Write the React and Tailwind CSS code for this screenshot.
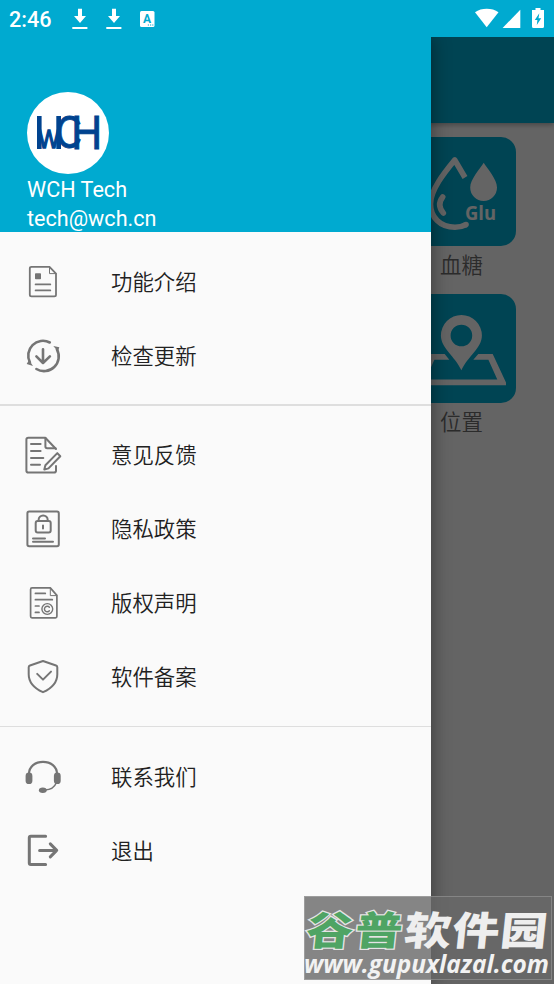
import React from "react";

const MenuIcon = ({ children, width = 2 }) => (
  <svg
    className="h-10 w-10 shrink-0"
    viewBox="0 0 40 40"
    fill="none"
    stroke="#757575"
    strokeWidth={width}
    strokeLinecap="round"
    strokeLinejoin="round"
  >
    {children}
  </svg>
);

const IntroIcon = () => (
  <MenuIcon width={1.8}>
    <path d="M26.5 4.8H8.5Q6.8 4.8 6.8 6.5V32.8Q6.8 34.4 8.5 34.4H31.4Q33 34.4 33 32.8V11.6Z" />
    <path d="M26.5 5V11.6H33" strokeWidth="1" />
    <rect x="12" y="11.2" width="6" height="6" rx="0.8" fill="#757575" stroke="none" />
    <path d="M12.6 22.4H27.3M12.6 28.4H27.3" />
  </MenuIcon>
);

const UpdateIcon = () => (
  <MenuIcon width={2.6}>
    <path d="M6.9 26.3A14.7 14.7 0 0 1 26.8 6.5" />
    <path d="M33.9 13.3A14.7 14.7 0 0 1 13.4 33" />
    <path d="M30.3 10L36.3 11.3L35 15.5Z" fill="#757575" stroke="none" />
    <path d="M3.7 28L6 24L10 30Z" fill="#757575" stroke="none" />
    <path d="M20 13.2V26M13.4 20.4L20 27L26.9 20.4" />
  </MenuIcon>
);

const FeedbackIcon = () => (
  <MenuIcon>
    <path d="M33 31V35.8Q33 37.6 31 37.6H5.3Q3.4 37.6 3.4 35.8V4.5Q3.4 2.7 5.3 2.7H22.3L33 14" />
    <path d="M22.4 3V11.5Q22.4 13.2 24.2 13.2H32.5" />
    <path d="M8 9.1H17.6M8 16H17.6M8 23H20.3M8 29.8H17" />
    <path d="M21.3 34.6L22.4 30.3L34.3 18.1L37.3 21.2L25.5 33.4Z" />
  </MenuIcon>
);

const PrivacyIcon = () => (
  <MenuIcon>
    <rect x="4.4" y="2.6" width="31.4" height="34.7" rx="1.8" />
    <rect x="12.7" y="12" width="15" height="11.4" rx="2" />
    <path d="M15.6 12V11A4.5 4.5 0 0 1 24.7 11V12M20 16.6V19.4" />
    <path d="M10 29.5H22M10 32.8H30" />
  </MenuIcon>
);

const CopyrightIcon = () => (
  <MenuIcon width={1.7}>
    <path d="M27.3 4.9H9Q7.6 4.9 7.6 6.4V33.3Q7.6 34.8 9 34.8H32.5Q33.9 34.8 33.9 33.3V12.4Z" />
    <path d="M27.3 5V12.6H33.8" strokeWidth="1" />
    <path d="M12.4 10.4H22.3M12.4 16.7H29.3M12.4 23H16M12.4 29.4H16" />
    <circle cx="24.3" cy="26" r="5.4" strokeWidth="1.4" />
    <path d="M26.4 24.2A2.8 2.8 0 1 0 26.4 27.8" strokeWidth="1.4" />
  </MenuIcon>
);

const ShieldIcon = () => (
  <MenuIcon>
    <path d="M20 4L33 8.5Q34.3 9 34.3 10.3V17.2C34.3 25.6 28 31.6 20 35.2C12 31.6 5.7 25.6 5.7 17.2V10.3Q5.7 9 7 8.5Z" />
    <path d="M14.2 16.9L20 22.6L28 14.6" />
  </MenuIcon>
);

const ContactIcon = () => (
  <MenuIcon>
    <path d="M6 17C6 9.5 12.2 4.8 20 4.8S34 9.5 34 17" strokeWidth="2.2" />
    <rect x="2.6" y="15.5" width="6.8" height="11.6" rx="3.4" fill="#757575" stroke="none" />
    <rect x="30.9" y="15.5" width="6.8" height="11.6" rx="3.4" fill="#757575" stroke="none" />
    <path d="M33.2 26C31.5 30.3 28 32.7 22 33" strokeWidth="1.5" />
    <ellipse cx="19.8" cy="33.2" rx="3.9" ry="2.7" fill="#757575" stroke="none" />
  </MenuIcon>
);

const ExitIcon = () => (
  <MenuIcon width={3}>
    <path d="M22.6 5.3H7.8Q6.3 5.3 6.3 6.8V32Q6.3 33.5 7.8 33.5H22.6" />
    <path d="M16.6 19.4H33.5M27.3 12.9L33.7 19.4L27.3 25.9" />
  </MenuIcon>
);

const sections = [
  {
    className: "pt-[13px] pb-[11px] border-b-2",
    items: [
      { label: "功能介绍", Icon: IntroIcon },
      { label: "检查更新", Icon: UpdateIcon },
    ],
  },
  {
    className: "py-3 border-b",
    items: [
      { label: "意见反馈", Icon: FeedbackIcon },
      { label: "隐私政策", Icon: PrivacyIcon },
      { label: "版权声明", Icon: CopyrightIcon },
      { label: "软件备案", Icon: ShieldIcon },
    ],
  },
  {
    className: "pt-[13px]",
    items: [
      { label: "联系我们", Icon: ContactIcon },
      { label: "退出", Icon: ExitIcon },
    ],
  },
];

const DownloadIcon = () => (
  <svg className="h-6 w-4" viewBox="0 0 16 24" fill="#fff">
    <path d="M6 1.8H10V9H14L8 16L2 9H6ZM0.3 20H15.4V22H0.3Z" />
  </svg>
);

const StatusBar = () => (
  <div className="relative z-30 flex h-[37px] items-center bg-[#00aad0] text-white">
    <span className="ml-[9px] w-[63px] pt-[2px] font-[Roboto,sans-serif] text-[21.6px] leading-[35px] font-medium">
      2:46
    </span>
    <DownloadIcon />
    <span className="w-[18px]" />
    <DownloadIcon />
    <svg className="ml-[18px] h-4 w-[15px]" viewBox="0 0 15 16">
      <rect width="14.5" height="16" rx="1.5" fill="#fff" />
      <text x="3" y="11.5" fontSize="12" fontWeight="700" fontFamily="Roboto, sans-serif" fill="#00aad0">
        A
      </text>
      <path d="M7.8 14H9M10 14H11.2M12.2 14H13.4" stroke="#00aad0" strokeWidth="1.2" />
    </svg>
    <svg className="ml-auto h-[21px] w-[71px]" viewBox="0 0 71 21" fill="#fff">
      <path d="M0 4.3C6.5 -0.3 17 -0.3 23.5 4.3L11.7 19.3Z" />
      <path d="M45.3 1.7V20H27.6Z" />
      <path d="M60.5 0H65.5V2H69V18.5Q69 20 67.5 20H58.5Q57 20 57 18.5V2H60.5Z" />
      <path d="M64.3 5.2L59.8 12H62.4L61.8 17L66.2 10.2H63.5Z" fill="#00aad0" />
    </svg>
    <span className="w-2" />
  </div>
);

const GlucoseIcon = () => (
  <svg className="h-full w-full" viewBox="0 0 109 109" fill="none" stroke="#fafafa" strokeWidth="5.6">
    <path d="M58 40.5L47.7 23C37 36 23.5 53 23.5 67C23.5 80 33 90.3 48 90.3Q54 90.3 58.7 87.8" strokeLinejoin="round" />
    <circle cx="59" cy="87.6" r="2.8" fill="#fafafa" stroke="none" />
    <path d="M35.7 60Q29.5 68 36.3 76" strokeLinecap="round" />
    <path d="M76.7 25.7C80.5 32 90 42 90 50.5A13.3 13.3 0 0 1 63.2 50.5C63.2 42 73 32 76.7 25.7Z" fill="#fafafa" stroke="none" />
    <text
      x="58"
      y="82.5"
      textLength="31"
      lengthAdjust="spacingAndGlyphs"
      fontSize="19"
      fontWeight="700"
      fontFamily="'Open Sans', sans-serif"
      fill="#fafafa"
      stroke="none"
    >
      Glu
    </text>
  </svg>
);

const LocationIcon = () => (
  <svg className="h-full w-full" viewBox="0 0 109 109" fill="#fafafa" fillRule="evenodd">
    <path d="M54.4 21A20.5 20.5 0 0 1 74.9 41.5C74.9 54 61 62 54.4 76.3C47.8 62 33.9 54 33.9 41.5A20.5 20.5 0 0 1 54.4 21ZM54.4 30.7A10.8 10.8 0 1 0 54.4 52.3A10.8 10.8 0 1 0 54.4 30.7Z" />
    <path d="M71.3 60H85.7L99 88.5V91.2H9.8V88.5L23.1 60H37.7L42.3 65.8H27.4L18.5 85.5H90.3L81.4 65.8H66.3Z" />
  </svg>
);

const Tile = ({ label, children }) => (
  <div className="flex h-[157px] w-[109px] flex-col items-center">
    <div className="h-[109px] w-[109px] overflow-hidden rounded-[15px] bg-[#00aad0]">{children}</div>
    <span className="mt-[2px] text-[21.4px] leading-8 font-[350] text-[#6c6c6c]">{label}</span>
  </div>
);

const Logo = () => (
  <svg
    className="h-[82px] w-[82px] shrink-0 rounded-full bg-white"
    viewBox="0 0 82 82"
    fill="#00438f"
    stroke="#00438f"
    fontFamily="'Liberation Sans', Arial, sans-serif"
    fontSize="48"
  >
    <rect x="10" y="24" width="4.6" height="33" stroke="none" />
    <rect x="29.3" y="24" width="4.7" height="33" stroke="none" />
    <text transform="translate(11.3 56.3) scale(0.47 0.53)" strokeWidth="2.6">W</text>
    <text transform="translate(29 56.4) scale(0.74 0.95)" strokeWidth="0.8">C</text>
    <text transform="translate(44.2 57) scale(0.89 1)" strokeWidth="0.9">H</text>
  </svg>
);

const Drawer = () => (
  <div className="absolute top-[37px] bottom-0 left-0 z-20 w-[431px] bg-[#fafafa] shadow-[0_0_18px_rgba(0,0,0,0.45)]">
    <div className="flex h-[195px] flex-col bg-[#00aad0] pt-[55px] pl-[27px] font-[Roboto,sans-serif] text-[21.6px] text-white">
      <Logo />
      <span className="pt-px leading-[29px]">WCH Tech</span>
      <span className="leading-[29px]">tech@wch.cn</span>
    </div>
    {sections.map((section, index) => (
      <div key={index} className={`border-[#dedede] ${section.className}`}>
        {section.items.map(({ label, Icon }) => (
          <div key={label} className="flex h-[74px] items-center gap-12 pl-[23px]">
            <Icon />
            <span className="pb-[2px] text-[21.4px] leading-8 font-[350] text-[#212121]">{label}</span>
          </div>
        ))}
      </div>
    ))}
  </div>
);

const Watermark = () => (
  <div className="absolute right-[2px] bottom-1 z-40 h-[84px] w-[248px] border border-white/20 bg-[#686868]/80">
    <svg className="h-full w-full overflow-visible" viewBox="0 0 246 82">
      <g
        transform="translate(0 48) skewX(-6) scale(1 0.84)"
        fontFamily="'Noto Sans CJK SC', sans-serif"
        fontSize="47"
        fontWeight="900"
      >
        <text x="0" y="0" textLength="96" fill="#4fa464" stroke="#e4e4e4" strokeWidth="3" paintOrder="stroke">
          谷普
        </text>
        <text x="98" y="0" textLength="143" fill="#eeeeee">
          软件园
        </text>
      </g>
      <text
        x="-1"
        y="76"
        textLength="245"
        lengthAdjust="spacingAndGlyphs"
        fontFamily="'Open Sans', sans-serif"
        fontSize="25"
        fontWeight="700"
        fontStyle="italic"
        fill="#f2f2f2"
      >
        www.gupuxlazal.com
      </text>
    </svg>
  </div>
);

export default function App() {
  return (
    <div className="relative h-[984px] w-[554px] overflow-hidden bg-[#fafafa] font-['Noto_Sans_CJK_SC',sans-serif]">
      <StatusBar />
      <div className="relative z-[1] h-[86px] bg-[#00aad0] shadow-[0_2px_5px_rgba(0,0,0,0.3)]" />
      <div className="flex flex-col items-end pt-[14px] pr-[38px]">
        <Tile label="血糖">
          <GlucoseIcon />
        </Tile>
        <Tile label="位置">
          <LocationIcon />
        </Tile>
      </div>
      <div className="absolute inset-x-0 top-[37px] bottom-0 z-10 bg-black/60" />
      <Drawer />
      <Watermark />
    </div>
  );
}
